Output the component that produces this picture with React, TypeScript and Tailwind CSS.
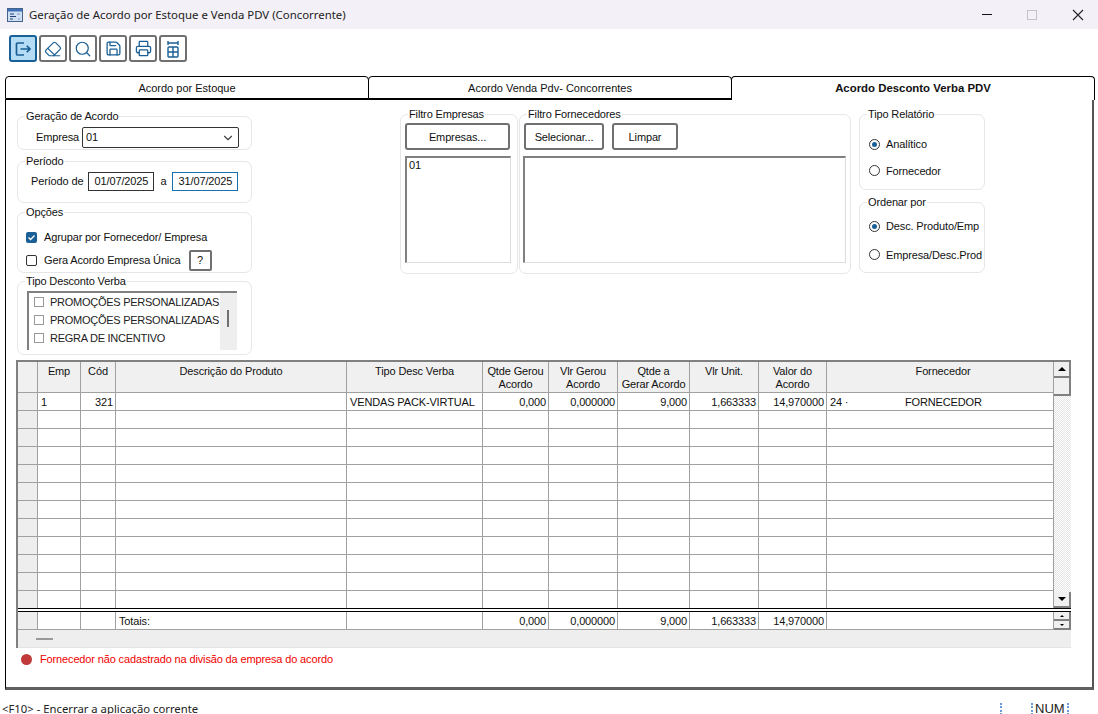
import type { ReactNode } from "react";
import { ChevronDown, Eraser, Printer, Save, Search } from "lucide-react";

const columns = "grid grid-cols-[20px_43px_35px_231px_136px_66px_69px_72px_69px_68px_227px]";
const cell = "h-[18px] border-r border-b border-[#a0a0a0] pr-[2px] pl-[3px] leading-[19px] whitespace-nowrap overflow-hidden";

const headers = [
  "",
  "Emp",
  "Cód",
  "Descrição do Produto",
  "Tipo Desc Verba",
  "Qtde Gerou\nAcordo",
  "Vlr Gerou\nAcordo",
  "Qtde a\nGerar Acordo",
  "Vlr Unit.",
  "Valor do\nAcordo",
  "Fornecedor",
];

const firstRow = ["1", "321", "", "VENDAS PACK-VIRTUAL", "0,000", "0,000000", "9,000", "1,663333", "14,970000"];
const totals = ["", "", "Totais:", "", "0,000", "0,000000", "9,000", "1,663333", "14,970000"];
const rightAligned = [1, 4, 5, 6, 7, 8];

function Group({ label, className, children }: { label: string; className: string; children?: ReactNode }) {
  return (
    <div className={`relative rounded-[7px] border border-[#e6e6e6] ${className}`}>
      <span className="absolute -top-[8px] left-[7px] bg-white px-[1px] leading-[15px] text-[#111]">{label}</span>
      {children}
    </div>
  );
}

function Radio({ checked, label }: { checked?: boolean; label: string }) {
  return (
    <div className="flex items-center gap-[6px] whitespace-nowrap">
      <span className="flex h-[11px] w-[11px] shrink-0 items-center justify-center rounded-full border border-[#333]">
        {checked && <span className="h-[5px] w-[5px] rounded-full bg-[#1a5f95]" />}
      </span>
      {label}
    </div>
  );
}

function ToolButton({ active, children }: { active?: boolean; children: ReactNode }) {
  return (
    <button
      className={`flex h-[27px] w-[28px] items-center justify-center rounded-[3px] border-2 text-[#1a5f95] ${
        active ? "border-[#1a5f95] bg-[#b5dcf5]" : "border-[#707070] bg-white"
      }`}
    >
      {children}
    </button>
  );
}

function ActionButton({ className, children }: { className: string; children: ReactNode }) {
  return (
    <button className={`h-[27px] rounded-[3px] border-2 border-[#707070] bg-white pt-[2px] text-[#111] ${className}`}>
      {children}
    </button>
  );
}

function ScrollButton({ down, small }: { down?: boolean; small?: boolean }) {
  const size = small ? "border-x-[2px]" : "border-x-[4px]";
  const arrow = down
    ? small
      ? "border-t-[2px] border-t-black"
      : "border-t-[4px] border-t-black"
    : small
      ? "border-b-[2px] border-b-black"
      : "border-b-[4px] border-b-black";
  return (
    <div
      className={`flex items-center justify-center border-r-2 border-b-2 border-[#808080] bg-[#f0f0f0] ${
        small ? "h-[9px]" : "h-[16px]"
      }`}
    >
      <span className={`h-0 w-0 border-x-transparent ${size} ${arrow}`} />
    </div>
  );
}

function Tab({ active, className, children }: { active?: boolean; className: string; children: ReactNode }) {
  return (
    <div
      className={`flex items-center justify-center rounded-t-[4px] border-x border-t border-black bg-white pt-px tracking-normal ${
        active ? "relative z-10 h-[24px] text-[11.4px] font-bold" : "h-[23px] border-b"
      } ${className}`}
    >
      {children}
    </div>
  );
}

export default function App() {
  return (
    <div className="flex h-[714px] w-[1098px] flex-col overflow-hidden bg-white font-['Liberation_Sans',sans-serif] text-[11px] tracking-[-0.14px] text-[#111]">
      {/* barra de titulo */}
      <div className="flex h-[29px] shrink-0 items-center bg-[#f3f0f7] pl-[7px] font-['Noto_Sans',sans-serif] text-[11.4px] tracking-normal text-[#222]">
        <svg width="16" height="14" viewBox="0 0 16 14" className="mr-[6px]">
          <rect x="0.5" y="0.5" width="15" height="13" fill="#cfe0f4" stroke="#44628c" />
          <rect x="1" y="1" width="14" height="2.5" fill="#3f70b5" />
          <path d="M3 6h4M3 8.5h6M3 11h3" stroke="#22406e" />
          <path d="M10 6h3M11 11h2" stroke="#7a96bd" />
        </svg>
        Geração de Acordo por Estoque e Venda PDV (Concorrente)
        <div className="ml-auto flex items-center">
          <span className="h-px w-[10px] bg-[#111]" />
          <span className="ml-[35px] h-[10px] w-[10px] border border-[#c4c4c4]" />
          <svg width="12" height="12" viewBox="0 0 12 12" className="mr-[14px] ml-[35px]">
            <path d="M1 1l10 10M11 1L1 11" stroke="#222" strokeWidth="1.1" fill="none" />
          </svg>
        </div>
      </div>

      {/* barra de ferramentas */}
      <div className="flex h-[47px] shrink-0 items-start gap-[2px] pt-[6px] pl-[9px]">
        <ToolButton active>
          <svg width="18" height="18" viewBox="0 0 18 18" fill="none" stroke="currentColor" strokeWidth="1.7">
            <path d="M10 3H3.5a1 1 0 0 0-1 1v10a1 1 0 0 0 1 1H10" />
            <path d="M6.5 9h9.5M12.8 5.8 16 9l-3.2 3.2" />
          </svg>
        </ToolButton>
        <ToolButton>
          <Eraser size={18} strokeWidth={1.6} />
        </ToolButton>
        <ToolButton>
          <Search size={18} strokeWidth={1.6} />
        </ToolButton>
        <ToolButton>
          <Save size={17} strokeWidth={1.8} />
        </ToolButton>
        <ToolButton>
          <Printer size={17} strokeWidth={1.8} />
        </ToolButton>
        <ToolButton>
          <svg width="16" height="20" viewBox="0 0 16 20" fill="none" stroke="currentColor" strokeWidth="1.4">
            <path d="M3 2v4M13 2v4M3 4h10" />
            <rect x="3" y="8" width="10" height="10" rx="1" />
            <path d="M3 13h10M8 8v10" />
          </svg>
        </ToolButton>
      </div>

      {/* abas */}
      <div className="flex h-[23px] shrink-0 pl-[5px]">
        <Tab className="w-[364px]">Acordo por Estoque</Tab>
        <Tab className="-ml-px w-[364px]">Acordo Venda Pdv- Concorrentes</Tab>
        <Tab active className="-ml-px w-[364px]">
          Acordo Desconto Verba PDV
        </Tab>
      </div>

      {/* painel */}
      <div className="ml-[5px] h-[591px] w-[1089px] shrink-0 border-t border-r-2 border-b-[3px] border-l border-t-black border-r-[#555] border-b-[#606060] border-l-black">
        <div className="flex h-[260px]">
          <div className="ml-[11px] flex w-[235px] flex-col pt-[16px]">
            <Group label="Geração de Acordo" className="flex h-[34px] items-start pt-[10px] pl-[18px]">
              <span className="leading-[20px]">Empresa</span>
              <div className="ml-[3px] flex h-[21px] w-[157px] items-center justify-between rounded-[2px] border border-[#333] px-[3px]">
                01
                <ChevronDown size={14} className="text-[#444]" />
              </div>
            </Group>
            <Group label="Período" className="mt-[11px] h-[42px] pt-[10px] pl-[13px]">
              <div className="flex items-center">
                Período de
                <span className="ml-[5px] h-[19px] w-[66px] border border-[#333] text-center leading-[17px]">
                  01/07/2025
                </span>
                <span className="mx-[6px]">a</span>
                <span className="h-[19px] w-[66px] border border-[#1a6fb0] text-center leading-[17px]">31/07/2025</span>
              </div>
            </Group>
            <Group label="Opções" className="mt-[9px] flex h-[61px] flex-col pt-[16px] pl-[8px]">
              <div className="flex items-center gap-[7px]">
                <span className="flex h-[11px] w-[11px] items-center justify-center rounded-[2px] bg-[#1a5f95]">
                  <svg width="9" height="9" viewBox="0 0 9 9" fill="none" stroke="white" strokeWidth="1.3">
                    <path d="M1.5 4.5 3.6 6.5 7.5 2.5" />
                  </svg>
                </span>
                Agrupar por Fornecedor/ Empresa
              </div>
              <div className="mt-[4px] flex items-center gap-[7px]">
                <span className="h-[11px] w-[11px] rounded-[2px] border border-[#333]" />
                Gera Acordo Empresa Única
                <span className="ml-px flex h-[21px] w-[23px] items-center justify-center rounded-[2px] border-2 border-[#707070]">
                  ?
                </span>
              </div>
            </Group>
            <Group label="Tipo Desconto Verba" className="mt-[8px] h-[74px] pt-[9px] pl-[9px]">
              <div className="flex h-[59px] w-[210px] border-t-2 border-l-2 border-[#808080]">
                <div className="flex flex-1 flex-col pl-[5px] tracking-[-0.26px] text-[#222]">
                  {["PROMOÇÕES PERSONALIZADAS", "PROMOÇÕES PERSONALIZADAS", "REGRA DE INCENTIVO"].map((item, i) => (
                    <div key={i} className="flex h-[18px] items-center gap-[6px] whitespace-nowrap">
                      <span className="h-[10px] w-[10px] border border-[#999]" />
                      {item}
                    </div>
                  ))}
                </div>
                <div className="w-[17px] bg-[#eeeeee] pt-[17px] pl-[7px]">
                  <div className="h-[17px] w-[2px] bg-[#707070]" />
                </div>
              </div>
            </Group>
          </div>

          <Group label="Filtro Empresas" className="mt-[14px] ml-[148px] flex h-[160px] w-[118px] flex-col pt-[8px] pl-[4px]">
            <ActionButton className="w-[105px]">Empresas...</ActionButton>
            <div className="mt-[6px] h-[107px] w-[106px] border-t-2 border-r border-b border-l-2 border-t-[#808080] border-r-[#ddd] border-b-[#ddd] border-l-[#808080] pl-[2px] leading-[14px]">
              01
            </div>
          </Group>

          <Group label="Filtro Fornecedores" className="mt-[14px] ml-px flex h-[160px] w-[332px] flex-col pt-[8px] pl-[4px]">
            <div className="flex gap-[8px]">
              <ActionButton className="w-[80px]">Selecionar...</ActionButton>
              <ActionButton className="w-[66px]">Limpar</ActionButton>
            </div>
            <div className="mt-[6px] -ml-px h-[107px] w-[323px] border-t-2 border-r border-b border-l-2 border-t-[#808080] border-r-[#ddd] border-b-[#ddd] border-l-[#808080]" />
          </Group>

          <div className="mt-[14px] ml-[8px] flex w-[126px] flex-col">
            <Group label="Tipo Relatório" className="flex h-[76px] flex-col gap-[10px] pt-[21px] pl-[9px]">
              <Radio checked label="Analítico" />
              <Radio label="Fornecedor" />
            </Group>
            <Group label="Ordenar por" className="mt-[12px] flex h-[71px] flex-col gap-[12px] pt-[15px] pl-[9px]">
              <Radio checked label="Desc. Produto/Emp" />
              <Radio label="Empresa/Desc.Prod" />
            </Group>
          </div>
        </div>

        {/* grade */}
        <div className="ml-[10px] w-[1055px] border-t-2 border-l-2 border-[#808080]">
          <div className="flex h-[246px]">
            <div className="w-[1036px] overflow-hidden">
              <div className={columns}>
                {headers.map((h, i) => (
                  <div
                    key={i}
                    className={`h-[31px] border-r border-b border-[#a0a0a0] bg-[#f0f0f0] pt-[3px] text-center leading-[13px] whitespace-pre-line ${
                      i === 10 ? "pl-[6px]" : ""
                    }`}
                  >
                    {h}
                  </div>
                ))}
              </div>
              <div className={columns}>
                <div className={`${cell} bg-[#eeeeee]`} />
                {firstRow.map((v, i) => (
                  <div key={i} className={`${cell} ${rightAligned.includes(i) ? "text-right" : ""}`}>
                    {v}
                  </div>
                ))}
                <div className={`${cell} flex`}>
                  <span className="w-[75px] shrink-0">24 ·</span>
                  <span>FORNECEDOR</span>
                </div>
                {Array.from({ length: 11 }).flatMap((_, r) =>
                  Array.from({ length: 11 }).map((_, c) => (
                    <div key={`${r}-${c}`} className={`${cell} ${c === 0 ? "bg-[#eeeeee]" : ""}`} />
                  )),
                )}
              </div>
            </div>
            <div className="flex w-[17px] flex-col bg-[repeating-conic-gradient(#e4e4e4_0_25%,#ffffff_0_50%)] bg-[length:2px_2px]">
              <ScrollButton />
              <div className="h-[18px] border-r-2 border-b-2 border-[#808080] bg-[#f0f0f0]" />
              <div className="flex-1" />
              <ScrollButton down />
            </div>
          </div>
          <div className="h-[4px] border-y border-black" />
          <div className="flex">
            <div className={`w-[1036px] ${columns}`}>
              <div className={`${cell} bg-[#eeeeee]`} />
              {totals.map((v, i) => (
                <div key={i} className={`${cell} ${rightAligned.includes(i) && i !== 1 ? "text-right" : ""}`}>
                  {v}
                </div>
              ))}
              <div className={cell} />
            </div>
            <div className="flex w-[17px] flex-col">
              <ScrollButton small />
              <ScrollButton small down />
            </div>
          </div>
          <div className="flex h-[18px] items-center border-b border-[#e4e4e4] bg-[#eeeeee] pl-[18px]">
            <div className="h-[2px] w-[17px] bg-[#999]" />
          </div>
        </div>

        <div className="mt-[3px] ml-[15px] flex items-center gap-[8px] text-[#f00000]">
          <span className="h-[11px] w-[11px] rounded-full bg-[#c03a3a]" />
          Fornecedor não cadastrado na divisão da empresa do acordo
        </div>
      </div>

      {/* barra de status */}
      <div className="mt-[11px] flex shrink-0 items-center whitespace-nowrap pl-[2px] font-['Noto_Sans',sans-serif] text-[11.3px] leading-[15px] tracking-normal text-[#222]">
        <span className="w-[998px] shrink-0">&lt;F10&gt; - Encerrar a aplicação corrente</span>
        <span className="h-[12px] border-l-2 border-dotted border-[#6b9bd6]" />
        <span className="ml-[29px] h-[12px] border-l-2 border-dotted border-[#6b9bd6]" />
        <span className="mx-[2px] font-['Liberation_Sans',sans-serif] text-[13px]">NUM</span>
        <span className="h-[12px] border-l-2 border-dotted border-[#6b9bd6]" />
      </div>
    </div>
  );
}
